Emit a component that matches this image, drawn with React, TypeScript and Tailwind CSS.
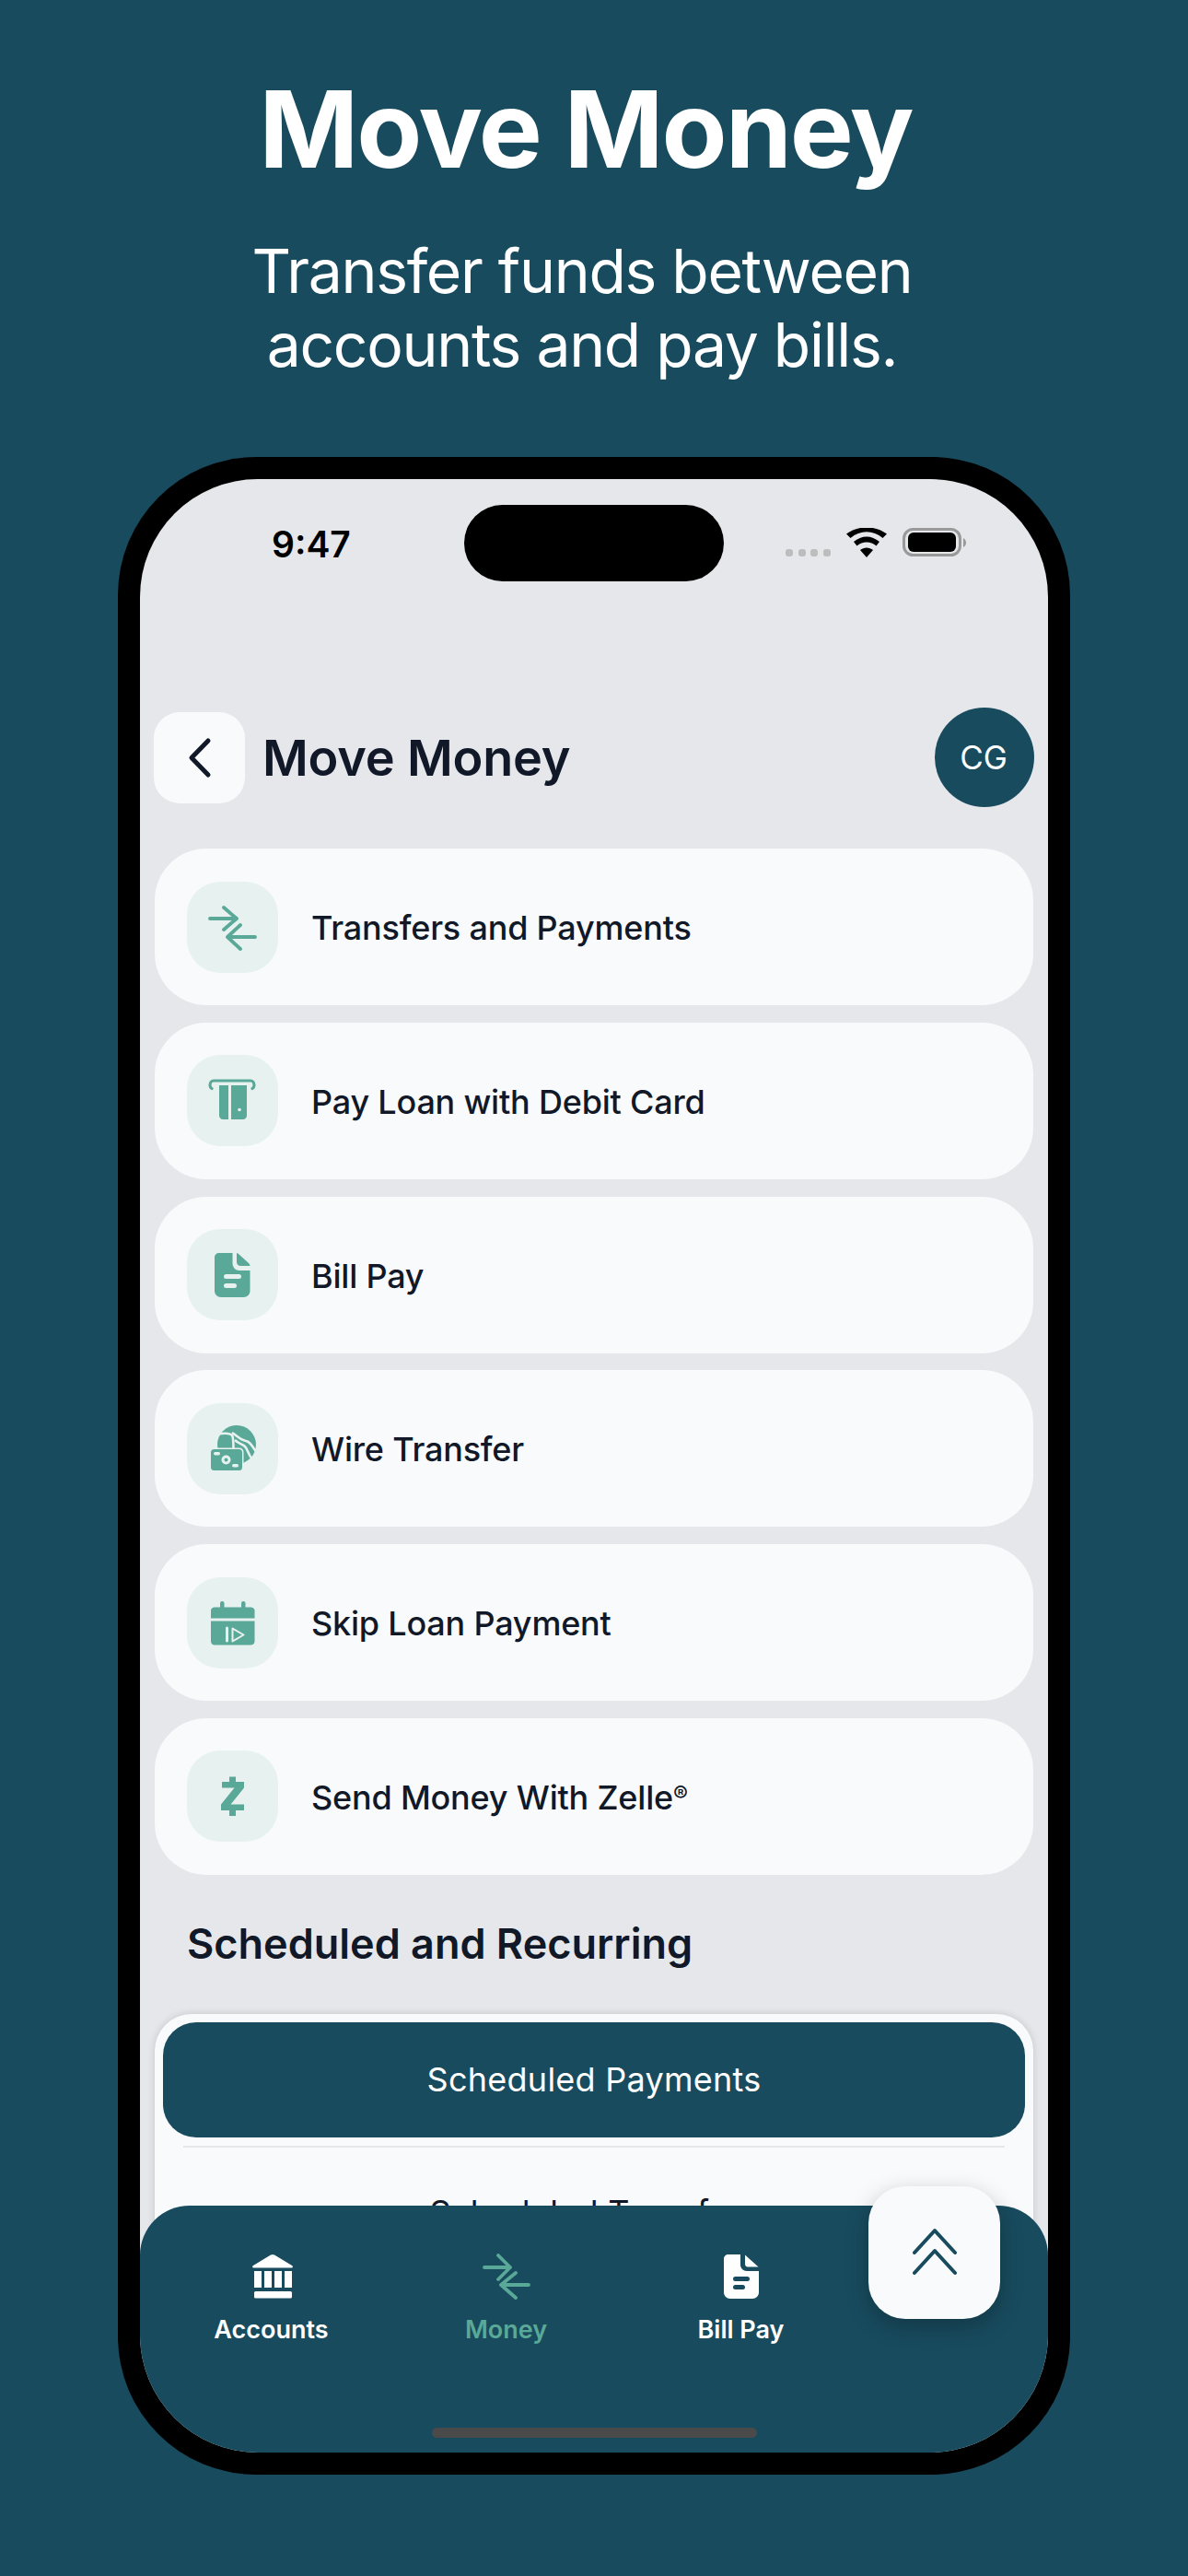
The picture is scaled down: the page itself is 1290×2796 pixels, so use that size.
const G = "#5aa897";
const L = "#e7f1f0";

function Box({ children }: { children: React.ReactNode }) {
  return (
    <div className="flex h-[99px] w-[99px] shrink-0 items-center justify-center rounded-[36px] bg-[#e7f1f0]">
      <svg width="99" height="99" viewBox="0 0 99 99">{children}</svg>
    </div>
  );
}

const Arrows = () => (
  <g fill="none" stroke={G} strokeWidth="3.8" strokeLinecap="round" strokeLinejoin="round">
    <path d="M25 40H54M40 28L54 40L40 52" />
    <path d="M74 60H45M58 47L44 60L58 73" />
  </g>
);

const Atm = () => (
  <g>
    <path d="M27 36.5C25.5 35.5 25 34.5 25 33C25 30 27 28 29 28H69C71 28 73 30 73 33C73 34.5 72.5 35.5 71 36.5" fill="none" stroke={G} strokeWidth="3.2" strokeLinecap="round" />
    <path d="M35 33H45V70H39C37 70 35 68 35 66Z M48 33H65V66C65 68 63 70 61 70H48Z" fill={G} />
    <circle cx="57" cy="59.5" r="1.8" fill={L} />
  </g>
);

const Bill = () => (
  <g>
    <path d="M35 26H49.5V37C49.5 41.5 52.5 45 57 45H68.5V67C68.5 71 65.5 74 61.5 74H37C33 74 30 71 30 67V31C30 28 32 26 35 26Z" fill={G} />
    <path d="M54 26C54 26 55 26 56 27L67 37C68 38 68.5 39 68.5 40H58C55.8 40 54 38.2 54 36Z" fill={G} />
    <rect x="40" y="49" width="19" height="5" rx="2.5" fill={L} />
    <rect x="40" y="59" width="14" height="5" rx="2.5" fill={L} />
  </g>
);

const Wire = () => (
  <g>
    <circle cx="54" cy="45" r="21" fill={G} />
    <g fill="none" stroke={L} strokeWidth="2.6">
      <path d="M30 35C38 32 46 32 49 35C50.5 37 50.5 42 50.5 50" />
      <path d="M49 32C55 36 58 40 64 41C69 42 71 47 76 54" />
      <path d="M52 40C56 44 60 44 63 47C66 50 66 55 71 61" />
    </g>
    <rect x="24.5" y="48.5" width="37" height="26" rx="4.5" fill={L} />
    <rect x="26" y="50" width="34" height="23" rx="3.5" fill={G} />
    <circle cx="42.5" cy="61.5" r="5" fill={L} />
    <circle cx="42.5" cy="61.5" r="2" fill={G} />
    <rect x="29" y="53" width="7" height="3.4" rx="1.7" fill={L} />
    <rect x="49" y="66" width="7" height="3.4" rx="1.7" fill={L} />
  </g>
);

const Cal = () => (
  <g>
    <rect x="36" y="26" width="4.5" height="10" rx="2.2" fill={G} />
    <rect x="59" y="26" width="4.5" height="10" rx="2.2" fill={G} />
    <path d="M26 36C26 34 28 32.5 30 32.5H69C71 32.5 73.5 34 73.5 36V44.5H26Z" fill={G} />
    <path d="M26 47.5H73.5V69.5C73.5 72 71.5 73.5 69 73.5H30C28 73.5 26 72 26 69.5Z" fill={G} />
    <rect x="42" y="53.5" width="3" height="17" rx="1.5" fill={L} />
    <path d="M49.5 55.5L61.5 62.5L49.5 69.5Z" fill="none" stroke={L} strokeWidth="2" strokeLinejoin="round" />
  </g>
);

const Zed = () => (
  <path d="M46 28.5H53V34H62V40.5L47.5 58.5H62V65H53V71H46V65H37V58.5L51.5 40.5H38V34H46Z" fill={G} />
);

function Row({ icon, children }: { icon: React.ReactNode; children: React.ReactNode }) {
  return (
    <div className="flex h-[170px] items-center gap-[36px] rounded-[56px] bg-[#f9fafc] pl-[35px]">
      <Box>{icon}</Box>
      <span className="pt-[2px] text-[36px] font-[450] leading-none tracking-[-0.2px] text-[#111827]">{children}</span>
    </div>
  );
}

function Tab({ label, color, children }: { label: string; color: string; children: React.ReactNode }) {
  return (
    <div className="flex w-[255px] flex-col items-center gap-[17px]" style={{ color }}>
      <svg width="60" height="50" viewBox="0 0 60 50">{children}</svg>
      <span className="text-[27px] font-semibold leading-[32px]">{label}</span>
    </div>
  );
}

export default function App() {
  return (
    <div className="h-[2796px] w-[1290px] overflow-hidden bg-[#184b5e] font-['Inter',sans-serif]">
      <div className="h-[496px] pr-[18px] pt-[70px] text-center text-white">
        <h1 className="text-[116px] font-bold leading-[140px] tracking-[-2px]">Move Money</h1>
        <p className="mt-[44px] pr-[8px] text-[66px] font-normal leading-[80px] tracking-[-1.3px]">
          Transfer funds between
          <br />
          accounts and pay bills.
        </p>
      </div>

      <div className="ml-[128px] h-[2190px] w-[1034px] rounded-[150px] bg-black p-[24px]">
        <div className="relative h-full w-full overflow-hidden rounded-[128px] bg-[#e5e7eb]">
          <div className="flex h-[248px] items-start pl-[143px] pt-[28px]">
            <div className="w-[209px] pt-[21px] text-[39px] font-semibold leading-[44px] text-black">9:47</div>
            <div className="h-[83px] w-[282px] rounded-[42px] bg-black" />
            <div className="ml-[67px] mt-[25px] flex items-center">
              <div className="mt-[22px] flex gap-[5.6px]">
                {[0, 1, 2, 3].map((i) => (
                  <div key={i} className="h-[8px] w-[8px] rounded-[3px] bg-[#bdbdbd]" />
                ))}
              </div>
              <svg className="ml-[17px]" width="44" height="32" viewBox="0 0 44 32">
                <path d="M22 32L15 24C19 20.5 25 20.5 29 24Z" fill="#000" />
                <path d="M11.5 19.5C17.5 14 26.5 14 32.5 19.5L36 15C27.5 7.5 16.5 7.5 8 15Z" fill="#000" />
                <path d="M4.5 11C15 2 29 2 39.5 11L44 6.5C30.5-3 13.5-3 0 6.5Z" fill="#000" />
              </svg>
              <svg className="ml-[17px]" width="70" height="32" viewBox="0 0 70 32">
                <rect x="1.5" y="1.5" width="61" height="28" rx="10" fill="none" stroke="#999" strokeWidth="3" />
                <rect x="6" y="5" width="52" height="21" rx="6" fill="#000" />
                <path d="M66 11C68 12 69 14 69 16C69 18 68 20 66 21Z" fill="#999" />
              </svg>
            </div>
          </div>

          <div className="flex h-[108px] items-center pl-[15px] pr-[15px]">
            <div className="flex h-[99px] w-[99px] items-center justify-center rounded-[28px] bg-[#f9fafc]">
              <svg width="99" height="99" viewBox="0 0 99 99" fill="none" stroke="#111827" strokeWidth="5" strokeLinecap="round" strokeLinejoin="round">
                <path d="M59 31L41 49.5L59 68" />
              </svg>
            </div>
            <div className="ml-[19px] flex-1 pt-[2px] text-[54px] font-semibold leading-none tracking-[-0.2px] text-[#111827]">Move Money</div>
            <div className="flex h-[108px] w-[108px] items-center justify-center rounded-full bg-[#184b5e] pr-[2px] text-[35px] text-white">CG</div>
          </div>

          <div className="mt-[45px] flex flex-col gap-[18.8px] px-[16px]">
            <Row icon={<Arrows />}>Transfers and Payments</Row>
            <Row icon={<Atm />}>Pay Loan with Debit Card</Row>
            <Row icon={<Bill />}>Bill Pay</Row>
            <Row icon={<Wire />}>Wire Transfer</Row>
            <Row icon={<Cal />}>Skip Loan Payment</Row>
            <Row icon={<Zed />}>
              Send Money With Zelle<span className="align-[8px] text-[24px]">®</span>
            </Row>
          </div>

          <h2 className="mb-[51px] mt-[50px] pl-[51px] text-[45px] font-semibold leading-[50px] text-[#111827]">Scheduled and Recurring</h2>

          <div className="mx-[16px] rounded-[40px] bg-[#f9fafc] p-[9px] shadow-[0_0_8px_rgba(0,0,0,0.15)]">
            <div className="flex h-[125px] items-center justify-center rounded-[36px] bg-[#184b5e] text-[36px] tracking-[0.25px] text-white">Scheduled Payments</div>
            <div className="mx-[22px] mt-[9px] h-[2px] bg-[#e5e7eb]" />
            <div className="flex h-[125px] items-center justify-center pt-[16px] text-[36px] tracking-[0.25px] text-[#111827]">Scheduled Transfers</div>
          </div>

          <div className="absolute inset-x-0 bottom-0 h-[268px] rounded-t-[54px] bg-[#184b5e]">
            <div className="flex pl-[15px] pt-[52px]">
              <Tab label="Accounts" color="#ffffff">
                <path d="M29 1.5C30 1 32 1 33 1.5L52 13C53.5 14 53 15.5 51.5 15.5H10.5C9 15.5 8.5 14 10 13Z" fill="currentColor" />
                <path d="M11 19H19V37H11ZM22 19H30V37H22ZM33 19H41V37H33ZM44 19H52V37H44Z" fill="currentColor" />
                <rect x="11" y="41" width="41" height="7.5" rx="1.5" fill="currentColor" />
              </Tab>
              <Tab label="Money" color="#5aa897">
                <g fill="none" stroke="currentColor" strokeWidth="3.8" strokeLinecap="round" strokeLinejoin="round">
                  <path d="M6 15H34M21 2L34 15L21 28" />
                  <path d="M54 34H24M40 21L24 34L40 48" />
                </g>
              </Tab>
              <Tab label="Bill Pay" color="#ffffff">
                <path d="M16 1H29V12C29 16 32 19 36 19H49V42C49 46 46 49 42 49H18C14 49 11 46 11 42V6C11 3 13 1 16 1Z" fill="currentColor" />
                <path d="M34 1.5L48.5 14.5H37C35 14.5 34 13 34 11Z" fill="currentColor" />
                <rect x="21" y="25" width="18" height="5" rx="2.5" fill="#184b5e" />
                <rect x="21" y="34" width="13" height="5" rx="2.5" fill="#184b5e" />
              </Tab>
            </div>
          </div>

          <div className="absolute bottom-[145px] left-[791px] flex h-[144px] w-[143px] items-center justify-center rounded-[40px] bg-[#f9fafc] shadow-[0_8px_24px_rgba(0,0,0,0.25)]">
            <svg width="60" height="60" viewBox="0 0 60 60" fill="none" stroke="#184b5e" strokeWidth="4" strokeLinecap="round" strokeLinejoin="round">
              <path d="M8 30L30 6L52 30M8 52L30 28L52 52" />
            </svg>
          </div>

          <div className="absolute bottom-[16px] left-[317px] h-[11px] w-[353px] rounded-full bg-[#4a4a4a]" />
        </div>
      </div>
    </div>
  );
}
